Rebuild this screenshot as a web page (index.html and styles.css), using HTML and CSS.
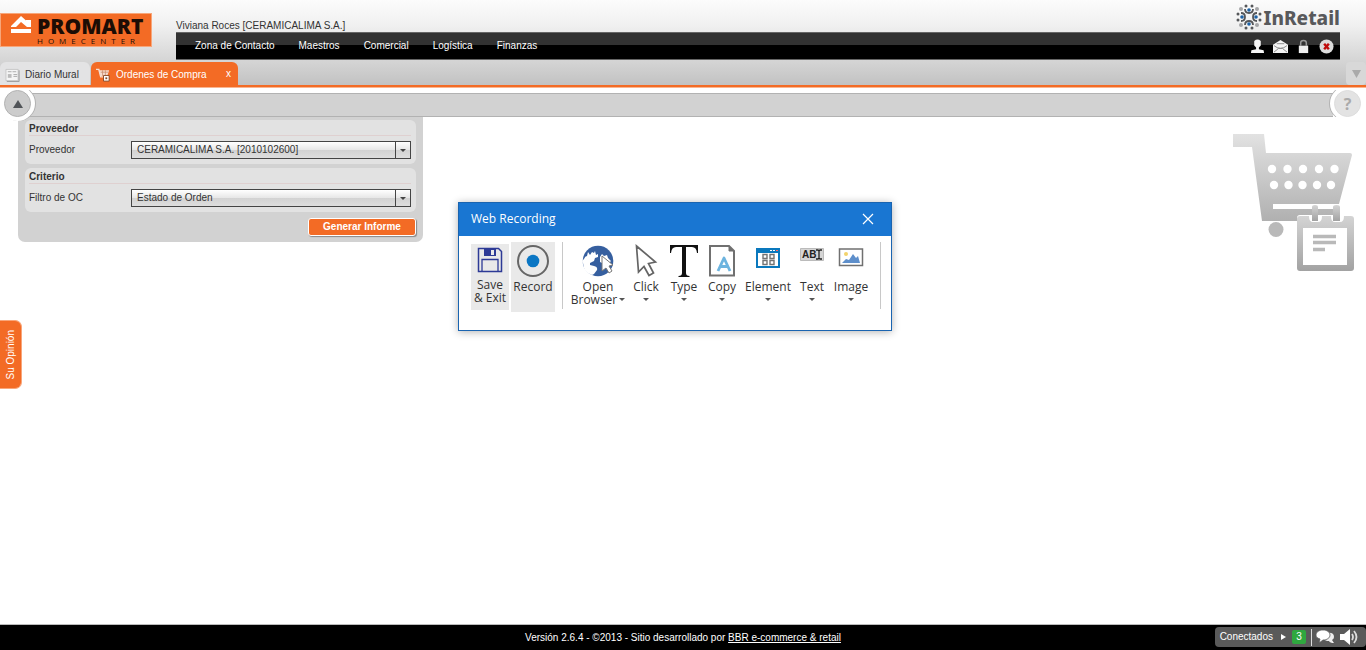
FILE: index.html
```html
<!DOCTYPE html>
<html lang="es">
<head>
<meta charset="utf-8">
<title>Promart - Ordenes de Compra</title>
<link rel="stylesheet" href="styles.css">
</head>
<body>
<header class="header">
  <div class="masthead">
    <a class="brand" href="#">
      <svg class="brand-mark" viewBox="0 0 22 20" aria-hidden="true"><path d="M1 12 11 2l5 4.500V6h5v7h-4l-6-5-5 5H1z" fill="#fff"/><path d="M1 15h20v4H1z" fill="#fff"/></svg>
      <span class="brand-words"><span class="brand-name">PROMART</span><span class="brand-sub">HOMECENTER</span></span>
    </a>
    <div class="head-main">
      <div class="head-top">
        <span class="user">Viviana Roces [CERAMICALIMA S.A.]</span>
        <span class="inretail">
          <svg class="inretail-mark" viewBox="0 0 26 26" aria-hidden="true">
            <g fill="none" stroke="#55575a" stroke-width="1.800"><path d="M9 5q0 4 4 4t4-4M9 21q0-4 4-4t4 4M5 9q4 0 4 4t-4 4M21 9q-4 0-4 4t4 4"/></g>
            <g fill="#1d62a6"><circle cx="13" cy="6" r="1.800"/><circle cx="13" cy="20" r="1.800"/><circle cx="6" cy="13" r="1.800"/><circle cx="20" cy="13" r="1.800"/></g>
            <g fill="#55575a"><circle cx="10" cy="2" r="1.500"/><circle cx="16" cy="2" r="1.500"/><circle cx="10" cy="24" r="1.500"/><circle cx="16" cy="24" r="1.500"/><circle cx="2" cy="10" r="1.500"/><circle cx="2" cy="16" r="1.500"/><circle cx="24" cy="10" r="1.500"/><circle cx="24" cy="16" r="1.500"/></g>
            <g fill="#a5a6a8"><circle cx="5" cy="5" r="2"/><circle cx="21" cy="5" r="2"/><circle cx="5" cy="21" r="2"/><circle cx="21" cy="21" r="2"/></g>
          </svg>
          <span class="inretail-name">InRetail</span>
        </span>
      </div>
      <nav class="nav">
        <a href="#">Zona de Contacto</a><a href="#">Maestros</a><a href="#">Comercial</a><a href="#">Logística</a><a href="#">Finanzas</a>
        <span class="nav-tools">
          <button class="icon-btn" aria-label="Perfil"><svg viewBox="0 0 16 16"><path d="M4.500 2q3.500-3 7 0v5L9.500 9v2l5 1 .5 3H1l.5-3 5-1V9l-2-2z" fill="#f4f4f4"/></svg></button>
          <button class="icon-btn" aria-label="Mensajes"><svg viewBox="0 0 16 16"><path d="M0 6 8 1l8 5v9H0z" fill="#f4f4f4"/><path d="M1 7q7 6 14 0M1 14l5-4h4l5 4M4 5h8" fill="none" stroke="#888"/></svg></button>
          <button class="icon-btn" aria-label="Bloquear"><svg viewBox="0 0 16 16"><path d="M5 7V4q0-2.500 3-2.500T11 4v3" fill="none" stroke="#999" stroke-width="1.600"/><path d="M3 7h10v8H3z" fill="#eee"/></svg></button>
          <button class="icon-btn" aria-label="Salir"><svg viewBox="0 0 16 16"><circle cx="8" cy="8" r="7.500" fill="#ddd"/><path d="m5.500 5 5 6m0-6-5 6" stroke="#c00d0d" stroke-width="2.600"/></svg></button>
        </span>
      </nav>
    </div>
  </div>
  <div class="tabs">
    <button class="tab">
      <svg class="tab-icon" viewBox="0 0 16 14" aria-hidden="true"><path d="M1 1h13v12H1z" fill="#f5f5f5" stroke="#c5c5c5"/><path d="M15 2v12H2" fill="none" stroke="#999"/><path d="M3 3.500h4m1 0h4M9 6.500h4M9 8.500h4" stroke="#aaa"/><path d="M3 6h4v4H3z" fill="#bbb"/></svg>
      Diario Mural</button>
    <div class="tab tab-active">
      <svg class="tab-icon" viewBox="0 0 16 14" aria-hidden="true"><path d="M0 1h3l2 8h5" fill="none" stroke="#f7ded0" stroke-width="1.500"/><path d="M3 2h11l-2 6H5z" fill="#f5dccf"/><path d="M5 4h8M7 2v6M10 2v6" stroke="#c98a69" stroke-width=".8"/><path d="M8 7.500h6v6H8z" fill="#fff" stroke="#8a4a28"/><path d="M10 9.500h2v2h-2z" fill="#8a4a28"/></svg>
      <span>Ordenes de Compra</span><button class="tab-close" aria-label="Cerrar">x</button>
    </div>
    <button class="tabs-more" aria-label="Más pestañas"><svg viewBox="0 0 9 8"><path d="M0 0h9L4.500 8z" fill="#aaa"/></svg></button>
  </div>
</header>

<main class="main">
  <div class="toolbar">
    <div class="toolbar-track"></div>
    <button class="round round-up" aria-label="Contraer"><svg viewBox="0 0 10 8"><path d="M0 8h10L5 0z" fill="#515458"/></svg></button>
    <button class="round round-help" aria-label="Ayuda">?</button>
  </div>
  <div class="content">
    <form class="filters">
      <fieldset class="group">
        <legend class="legend">Proveedor</legend>
        <div class="field">
          <label for="prov">Proveedor</label>
          <span class="select-box"><select id="prov"><option>CERAMICALIMA S.A. [2010102600]</option></select></span>
        </div>
      </fieldset>
      <fieldset class="group">
        <legend class="legend">Criterio</legend>
        <div class="field">
          <label for="filtro">Filtro de OC</label>
          <span class="select-box"><select id="filtro"><option>Estado de Orden</option></select></span>
        </div>
      </fieldset>
      <button class="submit" type="button">Generar Informe</button>
    </form>
    <svg class="cart" viewBox="0 0 122 139" aria-hidden="true">
      <defs>
        <linearGradient id="cg" x1="0" y1="0" x2="0" y2="1"><stop offset="0" stop-color="#e2e2e2"/><stop offset="1" stop-color="#b0b0b0"/></linearGradient>
        <linearGradient id="ng" x1="0" y1="0" x2="0" y2="1"><stop offset="0" stop-color="#d4d4d4"/><stop offset="1" stop-color="#a2a2a2"/></linearGradient>
      </defs>
      <path d="M0 0h31l2 19h84q2 0 2 2l-13 49H40v5h66v12H29L19 13H0z" fill="url(#cg)"/>
      <g fill="#fff"><circle cx="39" cy="35" r="4.200"/><circle cx="54.500" cy="35" r="4.200"/><circle cx="70" cy="35" r="4.200"/><circle cx="86" cy="35" r="4.200"/><circle cx="101.500" cy="35" r="4.200"/><circle cx="41" cy="51" r="4.200"/><circle cx="55.500" cy="51" r="4.200"/><circle cx="69.500" cy="51" r="4.200"/><circle cx="84" cy="51" r="4.200"/><circle cx="98" cy="51" r="4.200"/></g>
      <circle cx="43" cy="95.500" r="7.500" fill="#b9b9b9"/>
      <path d="M64 84q0-3 3-3h54v55H64z" fill="#fff"/>
      <path d="M67 82h9q0 6 4 6h5q4 0 4-6h9q0 6 4 6h5q4 0 4-6h7q3 0 3 3v49q0 3-3 3H67q-3 0-3-3V85q0-3 3-3zM70 94v37h44V94z" fill="url(#ng)" fill-rule="evenodd"/>
      <path d="M79 73q0-2 3-2t3 2v14h-6zM100 73q0-2 3.500-2t3.500 2v14h-7z" fill="url(#ng)"/>
      <path d="M80 102.500h23M80 108.500h23M80 115.500h12" stroke="#b9b9b9" stroke-width="3.500"/>
    </svg>
  </div>
</main>

<button class="feedback">Su Opinión</button>

<section class="dialog" role="dialog" aria-label="Web Recording">
  <div class="dialog-title"><span>Web Recording</span>
    <button class="dialog-close" aria-label="Close"><svg viewBox="0 0 12 12"><path d="m1 1 10 10M11 1 1 11" stroke="#fff" stroke-width="1.200"/></svg></button></div>
  <div class="tools">
    <button class="tool tool-save">
      <svg class="ic-26" viewBox="0 0 26 26"><path d="M1.500 1.500h20l3 3v20h-23z" fill="none" stroke="#2d3a96" stroke-width="1.500"/><path d="M7 1h12v8H7z" fill="#2d3a96"/><path d="M14 3h3v5h-3z" fill="#e9e9e9"/><path d="M5 24V12.500h16V24" fill="none" stroke="#2d3a96" stroke-width="1.300"/></svg>
      <span>Save<br>&amp; Exit</span></button>
    <button class="tool tool-record">
      <svg class="ic-34" viewBox="0 0 34 34"><circle cx="17" cy="17" r="15" fill="none" stroke="#666" stroke-width="2"/><circle cx="17" cy="17" r="6.300" fill="#0a76c4"/></svg>
      <span>Record</span></button>
    <span class="rule rule-left"></span>
    <button class="tool tool-open">
      <svg class="ic-34" viewBox="0 0 34 34"><circle cx="17" cy="17" r="15.300" fill="#365f9f"/><path d="M3 15q1-3 3-3l1-4 2 3 2-3 2 1 1-2 1 4 2-1v3l-3 1-1 3-4 2v2l4 1q4 1 3 4l-3 4-2 1q-6-2-8-7l-1-5-1-2z" fill="#fff"/><path d="M19 13l2-3 2 2 3-1 1 3 3 3-2 2-3-2-2 3-4-2z" fill="#fff"/><path d="m21 12 11 9-4 1 3 5-3 2-3-5-4 3z" fill="#fff" stroke="#777" stroke-width="1"/></svg>
      <span>Open<br>Browser<i class="caret"></i></span></button>
    <button class="tool tool-click">
      <svg class="ic-34" viewBox="0 0 34 34"><path d="M7.500 2 26.500 18l-7 1.500 5 9.500-4.500 2.500-5-9L9.500 28z" fill="none" stroke="#656565" stroke-width="1.700"/></svg>
      <span>Click</span><i class="caret"></i></button>
    <button class="tool tool-type">
      <svg class="ic-34" viewBox="0 0 34 34"><path d="M3 1h28v8h-1q-.5-6-5-6h-6v26q0 3 3.500 3v1h-11v-1q3.500 0 3.500-3V3H9q-4.500 0-5 6H3z" fill="#111"/></svg>
      <span>Type</span><i class="caret"></i></button>
    <button class="tool tool-copy">
      <svg class="ic-34" viewBox="0 0 34 34"><path d="M5 2h19l5 5v24.500H5z" fill="#fff" stroke="#707070" stroke-width="2"/><path d="M24 2v5h5" fill="#707070" stroke="#707070"/><path d="m13 27 6-13 6 13M15 22.500h8" fill="none" stroke="#6db4df" stroke-width="2.800" stroke-linejoin="round"/></svg>
      <span>Copy</span><i class="caret"></i></button>
    <button class="tool tool-element">
      <svg class="ic-34" viewBox="0 0 34 34"><path d="M6 5h22v18H6z" fill="#fff" stroke="#0a78bd" stroke-width="2"/><path d="M5 4h24v5H5z" fill="#0a78bd"/><path d="M19 6h2v1h-2zm3 0h2v1h-2z" fill="#fff"/><path d="M25 6h2v1h-2z" fill="#f66"/><path d="M12 10.500h4v4h-4zm7 0h4v4h-4zm-7 6h4v4h-4zm7 0h4v4h-4z" fill="none" stroke="#737373" stroke-width="1.400"/></svg>
      <span>Element</span><i class="caret"></i></button>
    <button class="tool tool-text">
      <svg class="ic-34" viewBox="0 0 34 34"><path d="M5.500 4.500h23v12h-23z" fill="#d5d5d5" stroke="#bbb"/><text class="abi" x="7" y="14">AB</text><path d="M21 6h2l1 1 1-1h2M21 15h2l1-1 1 1h2M24 7v7" fill="none" stroke="#222" stroke-width="1.300"/></svg>
      <span>Text</span><i class="caret"></i></button>
    <button class="tool tool-image">
      <svg class="ic-34" viewBox="0 0 34 34"><path d="M5.500 5h23v16.500h-23z" fill="#fff" stroke="#707070" stroke-width="1.500"/><circle cx="12" cy="10" r="2" fill="#f3d36b"/><path d="m8 19 4-4 3 1 4-6 3 4 2-2 2 7z" fill="#5e8fcb"/></svg>
      <span>Image</span><i class="caret"></i></button>
    <span class="rule rule-right"></span>
  </div>
</section>

<footer class="footer">
  <p class="version">Versión 2.6.4 - ©2013 - Sitio desarrollado por <a href="#">BBR e-commerce &amp; retail</a></p>
  <div class="chat">
    <span>Conectados</span><svg class="chat-arrow" viewBox="0 0 5 6"><path d="M0 0v6l5-3z" fill="#fff"/></svg><span class="count">3</span>
    <span class="chat-sep"></span>
    <button class="chat-btn" aria-label="Chat"><svg viewBox="0 0 20 18"><path d="M12 5q7-1 7 4 0 2-2 3l2 3q-4 0-5-2-4 0-5-2" fill="#eee"/><path d="M8 2c4 0 7 2 7 5s-3 5-7 5l-4 3 1-4C2 10 1 9 1 7c0-3 3-5 7-5z" fill="#fff" stroke="#5a5a5a" stroke-width=".8"/></svg></button>
    <button class="chat-btn" aria-label="Sonido"><svg viewBox="0 0 20 18"><path d="M1 6h4l6-5v16l-6-5H1z" fill="#fff"/><path d="M13 6q2 3 0 6M15 3q5 6 0 12" fill="none" stroke="#ddd" stroke-width="1.800"/></svg></button>
  </div>
</footer>
</body>
</html>
```

FILE: styles.css
```css
* { box-sizing: border-box; }
body {
  margin: 0;
  min-height: 100vh;
  display: flex;
  flex-direction: column;
  position: relative;
  background: #fff;
  color: #333;
  font: 10px/14px "Liberation Sans", Arial, sans-serif;
}
button, select { font: inherit; color: inherit; border: 0; margin: 0; padding: 0; background: none; }
svg { display: block; }
a { color: inherit; }

.header {
  background: linear-gradient(#fcfcfc 0, #f0f0f0 30%, #c2c2c2 100%);
  border-bottom: 2px solid #f36b25;
  box-shadow: 0 1px #f9b591;
}
.masthead { display: flex; align-items: flex-start; gap: 24px; padding-right: 26px; }
.brand {
  display: flex;
  gap: 5px;
  width: 152px;
  height: 34px;
  margin-top: 13px;
  padding-left: 10px;
  background: #f36b25;
  color: #1c0d05;
  text-decoration: none;
  outline: 1px solid #f7a67a;
  outline-offset: -1px;
}
.brand-mark { width: 22px; height: 20px; margin-top: 1px; }
.brand-words { display: flex; flex-direction: column; padding-top: 3px; }
.brand-name { font: 800 21px/20px "Open Sans", sans-serif; }
.brand-sub { font: 8px/9px "Open Sans", sans-serif; letter-spacing: 5px; }
.head-main { flex: 1; }
.head-top { height: 32px; display: flex; justify-content: space-between; align-items: flex-end; }
.user { line-height: 13px; }
.inretail { display: flex; align-items: center; gap: 2px; height: 31px; color: #58595b; }
.inretail-mark { width: 26px; height: 26px; }
.inretail-name { font: 800 19px/26px "Noto Sans", "Open Sans", sans-serif; padding-top: 2px; }
.nav {
  display: flex;
  align-items: center;
  gap: 24px;
  height: 28px;
  padding: 0 6px 0 19px;
  border: solid #666;
  border-width: 1px 0;
  background: linear-gradient(#323232 48%, #000 48%);
  color: #fff;
}
.nav a { text-decoration: none; }
.nav-tools { display: flex; gap: 8px; margin-left: auto; }
.icon-btn svg { width: 15px; height: 15px; }
.tabs { display: flex; align-items: stretch; height: 25px; padding-top: 2px; gap: 1px; }
.tab {
  display: flex;
  align-items: center;
  gap: 5px;
  min-width: 90px;
  padding: 2px 5px 0;
  border-radius: 6px 6px 0 0;
  background: #e3e3e4;
}
.tab-icon { width: 15px; height: 14px; }
.tab-active { min-width: 147px; background: #f36b25; color: #fff; }
.tab-close { margin: 0 2px 2px auto; line-height: 12px; }
.tabs-more {
  display: grid;
  place-items: center;
  width: 20px;
  margin-left: auto;
  border-radius: 4px;
  background: #d8d8d8;
}
.tabs-more svg { width: 9px; height: 8px; }

.main { flex: 1; padding-top: 6px; }
.toolbar { position: relative; z-index: 1; }
.toolbar-track {
  height: 24px;
  margin: 0 33px 0 18px;
  background: #d2d2d2;
  border: solid #b2b2b2;
  border-width: 1px 0;
}
.round {
  position: absolute;
  top: -3px;
  width: 27px;
  height: 27px;
  display: grid;
  place-items: center;
  border-radius: 50%;
  border: 1px solid #b2b2b2;
  background: #ccc;
}
.round svg { width: 10px; height: 8px; }
.round-up { left: 4px; box-shadow: 0 0 0 4px #fff, 1px 0 0 4px #b2b2b2; clip-path: inset(0 -6px -4px -5px); }
.round-help {
  right: 5px;
  border-color: #ddd;
  background: #e3e3e3;
  color: #aaa;
  font: bold 16px/16px "Open Sans", sans-serif;
  box-shadow: 0 0 0 4px #fff, -1px 0 0 4px #b2b2b2;
  clip-path: inset(0 -4px 0 -6px);
}
.content { display: flex; justify-content: space-between; align-items: flex-start; padding: 0 11px 0 18px; }
.filters {
  width: 405px;
  padding: 3px 7px 6px;
  border-radius: 0 0 7px 7px;
  background: #d2d2d2;
  display: flex;
  flex-direction: column;
  gap: 4px;
}
.group { margin: 0; border: 0; border-radius: 6px; padding: 3px 5px 5px 4px; background: #e2e2e2; min-width: 0; }
.legend { float: left; width: 100%; padding: 0; line-height: 12px; font-weight: bold; border-bottom: 1px solid #dfd0d0; }
.field { clear: both; display: flex; align-items: center; padding-top: 5px; }
.field label { width: 102px; }
.select-box { position: relative; flex: 1; display: flex; }
.select-box select {
  appearance: none;
  flex: 1;
  height: 18px;
  padding: 0 20px 0 5px;
  border: 1px solid #444;
  border-radius: 0;
  background: linear-gradient(#fff, #e6e6e6 50%, #d2d2d2 50%, #dedede);
}
.select-box::before { content: ""; position: absolute; right: 15px; top: 1px; bottom: 1px; border-left: 1px solid #444; }
.select-box::after {
  content: "";
  position: absolute;
  right: 5px;
  top: 8px;
  border: solid transparent;
  border-width: 3px 3px 0;
  border-top-color: #444;
}
.submit {
  align-self: flex-end;
  width: 108px;
  height: 18px;
  margin-top: 2px;
  border: 1px solid #fff;
  border-radius: 3px;
  background: #f36b25;
  box-shadow: 1px 1px 1px #888;
  color: #fff;
  font-weight: bold;
}
.cart { width: 122px; height: 139px; margin-top: 17px; }

.feedback {
  position: absolute;
  left: 0;
  top: 320px;
  height: 69px;
  width: 22px;
  border: 1px solid #f9a67a;
  border-left: 0;
  border-radius: 0 7px 7px 0;
  background: #f36b25;
  color: #fff;
  writing-mode: sideways-lr;
  line-height: 20px;
}

.dialog {
  position: absolute;
  left: 458px;
  top: 202px;
  width: 434px;
  height: 129px;
  border: 1px solid #1a64b0;
  background: #fff;
  box-shadow: 0 1px 8px #0000004d;
  font: 12px/13px "Open Sans", "Noto Sans", sans-serif;
}
.dialog-title {
  display: flex;
  align-items: center;
  justify-content: space-between;
  height: 33px;
  padding: 0 17px 2px 12px;
  background: #1976d2;
  color: #fff;
}
.dialog-close svg { width: 12px; height: 12px; }
.tools { display: flex; align-items: flex-start; padding: 6px 8px 6px 12px; }
.tool { display: flex; flex-direction: column; align-items: center; flex: none; padding-top: 2px; }
.ic-34 { width: 34px; height: 34px; margin-bottom: 2px; }
.ic-26 { width: 26px; height: 26px; margin: 1px 0 5px; }
.tool-save, .tool-record { background: #e9e9e9; }
.tool-save { width: 38px; height: 66px; margin: 2px 2px 0 0; }
.tool-record { width: 44px; height: 70px; }
.tool-open { width: 62px; }
.tool-open .caret { display: inline-block; margin: 0 0 3px 2px; }
.tool-click { width: 34px; }
.tool-type { width: 42px; }
.tool-copy { width: 34px; }
.tool-element { width: 58px; }
.tool-text { width: 30px; }
.tool-image { width: 48px; }
.caret { border: solid transparent; border-width: 3px 3px 0; border-top-color: #555; }
.tool > .caret { margin-top: 5px; }
.rule { flex: none; width: 1px; height: 67px; background: #c8c8c8; }
.rule-left { margin: 0 4px 0 7px; }
.rule-right { margin-left: 5px; }
.abi { font: bold 10px "Liberation Sans", sans-serif; fill: #222; }

.footer {
  position: relative;
  display: flex;
  justify-content: center;
  align-items: center;
  height: 26px;
  border-top: 1px solid #bbb;
  background: #000;
  color: #fff;
}
.version { margin: 0; }
.chat {
  position: absolute;
  right: 0;
  top: 2px;
  display: flex;
  align-items: center;
  height: 20px;
  padding: 0 7px 0 5px;
  border-radius: 4px;
  background: #5a5a5a;
}
.chat-arrow { width: 5px; height: 6px; margin: 0 6px 0 8px; }
.count { width: 14px; border-radius: 2px; background: #2fa83f; text-align: center; }
.chat-sep { width: 1px; height: 17px; margin: 0 3px 0 5px; background: #ddd; }
.chat-btn svg { width: 20px; height: 18px; }
.chat-btn + .chat-btn { margin-left: 4px; }
```
